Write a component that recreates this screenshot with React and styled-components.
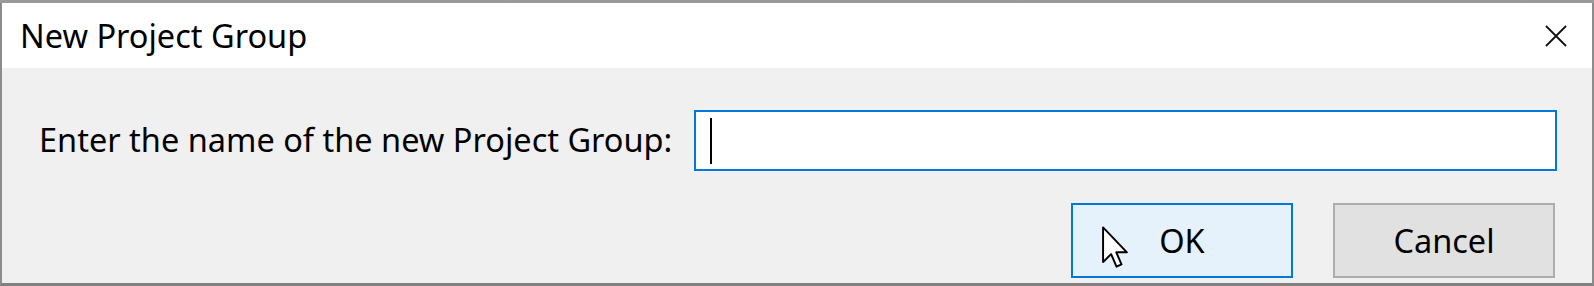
import React from "react";
import styled, { createGlobalStyle } from "styled-components";

const Global = createGlobalStyle`
  html, body { margin: 0; padding: 0; }
  body {
    width: 1594px;
    height: 286px;
    overflow: hidden;
    background: #7d7d7d;
    font-family: "Noto Sans", "Open Sans", sans-serif;
  }
  * { box-sizing: border-box; }
`;

const Page = styled.div`
  height: 286px;
  padding-top: 3px;
  display: flex;
  background: linear-gradient(#9a9a9a, #6f6f6f);
`;

const Window = styled.div`
  width: 1594px;
  height: 283px;
  display: flex;
  flex-direction: column;
  border-left: 2px solid #8c8c8c;
  border-right: 2px solid #8c8c8c;
  border-bottom: 3px solid #808080;
  background: #f0f0f0;
`;

const TitleBar = styled.div`
  height: 65px;
  flex: none;
  background: #ffffff;
  display: flex;
  align-items: center;
  justify-content: space-between;
  padding: 0 24px 0 18px;
`;

const Title = styled.div`
  font-size: 32.5px;
  line-height: 1.2;
  color: #000;
  margin-top: -1px;
`;

const Close = styled.div`
  width: 24px;
  height: 24px;
  display: flex;
  align-items: center;
  justify-content: center;
`;

const Body = styled.div`
  flex: 1;
  display: flex;
  flex-direction: column;
  padding: 42px 35px 0 37px;
`;

const Row = styled.div`
  display: grid;
  grid-template-columns: 655px 1fr;
  align-items: center;
`;

const Label = styled.label`
  font-size: 32.5px;
  line-height: 1.2;
  color: #000;
  white-space: nowrap;
  margin-top: -2px;
`;

const Input = styled.div`
  height: 61px;
  border: 2px solid #0078d7;
  background: #fff;
  display: flex;
  align-items: center;
  padding-left: 14px;
`;

const Caret = styled.span`
  width: 2px;
  height: 46px;
  background: #000;
`;

const Buttons = styled.div`
  display: flex;
  justify-content: flex-end;
  gap: 40px;
  margin-top: 32px;
  padding-right: 2px;
`;

const Button = styled.div`
  position: relative;
  width: 222px;
  height: 75px;
  display: flex;
  align-items: center;
  justify-content: center;
  font-size: 32.5px;
  line-height: 1.2;
  color: #000;
  border: 2px solid ${(p) => (p.$focused ? "#0078d7" : "#adadad")};
  background: ${(p) => (p.$focused ? "#e5f1fb" : "#e1e1e1")};
`;

const Cursor = styled.svg`
  position: absolute;
  left: 29px;
  top: 21px;
`;

export default function App() {
  return (
    <>
      <Global />
      <Page>
        <Window>
          <TitleBar>
            <Title>New Project Group</Title>
            <Close>
              <svg width="22" height="22" viewBox="0 0 22 22">
                <path d="M1 1 L21 21 M21 1 L1 21" stroke="#111" strokeWidth="1.8" fill="none" />
              </svg>
            </Close>
          </TitleBar>
          <Body>
            <Row>
              <Label>Enter the name of the new Project Group:</Label>
              <Input>
                <Caret />
              </Input>
            </Row>
            <Buttons>
              <Button $focused>
                OK
                <Cursor width="26" height="44" viewBox="0 0 12 20">
                  <path
                    d="M0.5 0.5 L0.5 16.5 L4.2 12.8 L6.7 18.6 L9 17.6 L6.6 12 L11.5 12 Z"
                    fill="#fff"
                    stroke="#000"
                    strokeWidth="0.9"
                    strokeLinejoin="round"
                  />
                </Cursor>
              </Button>
              <Button>Cancel</Button>
            </Buttons>
          </Body>
        </Window>
      </Page>
    </>
  );
}
